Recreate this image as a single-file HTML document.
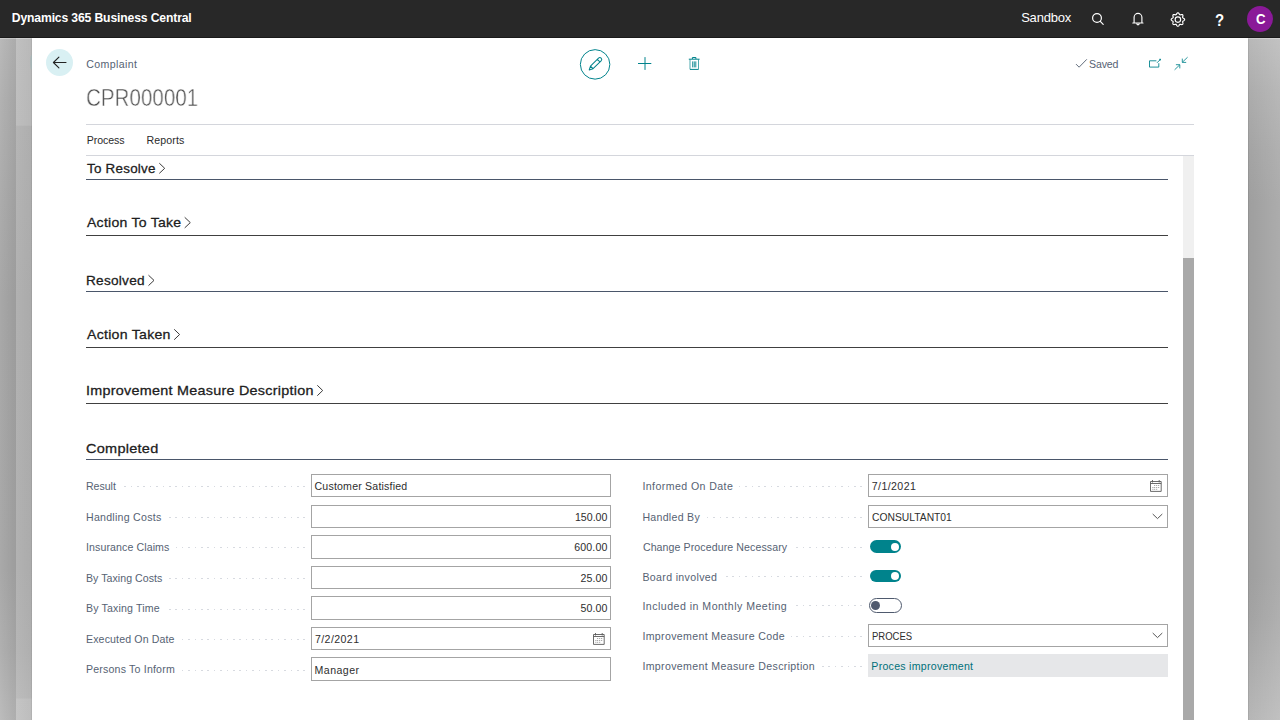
<!DOCTYPE html><html lang="en"><head><meta charset="utf-8"><title>Complaint - CPR000001 - Dynamics 365 Business Central</title><style>
*{box-sizing:border-box;margin:0;padding:0}
html,body{width:1280px;height:720px;overflow:hidden;background:#fff}
body{position:relative;font-family:"Liberation Sans",sans-serif}
.a{position:absolute}
.t{position:absolute;white-space:pre;line-height:20px;transform-origin:0 0}
.bar{left:0;top:0;width:1280px;height:38px;background:#282828;border-bottom:1px solid #1a1a1a}
.s1{left:0;top:38px;width:16px;height:682px;background:linear-gradient(to right,rgba(0,0,0,0),rgba(0,0,0,.075)),linear-gradient(to bottom,#b9b9b9 0%,#b2b2b2 9%,#acacac 24%,#a8a8a8 38%,#a9a9a9 78%,#b0b0b0 90%,#bcbcbc 100%)}
.s2{left:16px;top:38px;width:16px;height:682px;background:linear-gradient(to right,rgba(0,0,0,0),rgba(0,0,0,.04)),linear-gradient(to bottom,#c0c0c0 0%,#bebebe 12.8%,#b5b5b5 12.9%,#b1b1b1 38%,#b2b2b2 78%,#b6b6b6 90%,#bcbcbc 96.8%,#c4c4c4 96.9%,#c5c5c5 100%)}
.s2e{left:31px;top:38px;width:1px;height:682px;background:rgba(0,0,0,.06)}
.s3{left:1248px;top:38px;width:32px;height:682px;background:linear-gradient(to right,rgba(255,255,255,0),rgba(255,255,255,.15)),linear-gradient(to bottom,#b8b8b8 0%,#acacac 7.6%,#a3a3a3 16.5%,#9e9e9e 24%,#9e9e9e 79%,#a2a2a2 85%,#aaaaaa 91%,#b2b2b2 97%,#b6b6b6 100%)}
.s3e{left:1248px;top:38px;width:1px;height:682px;background:rgba(0,0,0,.07)}
.sr{height:1px;background:rgba(255,255,255,.28)}
.hl{height:1px;background:#d4d6dc}
.sl{left:86px;width:1082px;height:1px}
.box{border:1px solid #a4a4a4;background:#fff;width:300px}
.ro{background:#e6e7e9;width:300px}
.dots{height:1px;background-image:repeating-linear-gradient(to left,#d7dae0 0,#d7dae0 1.6px,transparent 1.6px,transparent 6.4px)}
.tg{border-radius:7px;background:#00838c}
.kn{border-radius:50%;background:#fff}
</style></head><body>
<div class="a bar"></div>
<div class="a s1"></div><div class="a s2"></div><div class="a s2e"></div><div class="a s3"></div><div class="a s3e"></div><div class="a sr" style="left:0;top:38px;width:32px"></div><div class="a sr" style="left:1248px;top:38px;width:32px"></div>
<div class="a" style="left:46px;top:49px;width:27px;height:27px;border-radius:50%;background:#d9f0f3"></div>
<div class="a" style="left:1247px;top:6px;width:26px;height:26px;border-radius:50%;background:#8a1998"></div>
<div class="a" style="left:30.3px;top:55px;width:3.4px;height:14.5px;border-radius:50%;background:#a6b4b5;clip-path:inset(0 1.7px 0 0)"></div>
<div class="a hl" style="left:86px;top:124px;width:1108px"></div>
<div class="a hl" style="left:86px;top:155px;width:1108px"></div>
<div class="a" style="left:1183px;top:156px;width:11px;height:564px;background:#f0f0f0"></div>
<div class="a" style="left:1183px;top:258px;width:11px;height:462px;background:#a9a9a9"></div>
<div class="a sl" style="top:179px;background:#4a566a"></div>
<div class="a sl" style="top:235px;background:#404040"></div>
<div class="a sl" style="top:291px;background:#4a566a"></div>
<div class="a sl" style="top:347px;background:#404040"></div>
<div class="a sl" style="top:403px;background:#404040"></div>
<div class="a sl" style="top:459px;background:#4a566a"></div>
<div class="a box" style="left:311px;top:474px;height:23px"></div>
<div class="a box" style="left:311px;top:505px;height:23px"></div>
<div class="a box" style="left:311px;top:535px;height:24px"></div>
<div class="a box" style="left:311px;top:566px;height:23px"></div>
<div class="a box" style="left:311px;top:596px;height:24px"></div>
<div class="a box" style="left:311px;top:627px;height:23px"></div>
<div class="a box" style="left:311px;top:657px;height:24px"></div>
<div class="a box" style="left:868px;top:474px;height:23px"></div>
<div class="a box" style="left:868px;top:505px;height:23px"></div>
<div class="a box" style="left:868px;top:624px;height:23px"></div>
<div class="a ro" style="left:868px;top:654px;height:23px"></div>
<div class="a dots" style="left:122.9px;top:486px;width:181.7px"></div>
<div class="a dots" style="left:167.8px;top:517px;width:136.8px"></div>
<div class="a dots" style="left:175.7px;top:547px;width:128.9px"></div>
<div class="a dots" style="left:168.7px;top:578px;width:135.9px"></div>
<div class="a dots" style="left:166.2px;top:609px;width:138.4px"></div>
<div class="a dots" style="left:181.2px;top:639px;width:123.4px"></div>
<div class="a dots" style="left:181.2px;top:670px;width:123.4px"></div>
<div class="a dots" style="left:739.4px;top:486px;width:122.4px"></div>
<div class="a dots" style="left:706.7px;top:517px;width:155.1px"></div>
<div class="a dots" style="left:793.9px;top:547px;width:67.9px"></div>
<div class="a dots" style="left:723.5px;top:576px;width:138.3px"></div>
<div class="a dots" style="left:792.9px;top:605px;width:68.9px"></div>
<div class="a dots" style="left:790.7px;top:636px;width:71.1px"></div>
<div class="a dots" style="left:821.3px;top:666px;width:40.5px"></div>
<div class="a tg" style="left:870px;top:540px;width:31px;height:13px"></div><div class="a kn" style="left:891px;top:542.5px;width:8.4px;height:8.4px"></div>
<div class="a tg" style="left:870px;top:570px;width:31px;height:12px"></div><div class="a kn" style="left:891px;top:572px;width:8.4px;height:8.4px"></div>
<div class="a" style="left:869px;top:598px;width:33px;height:15px;border-radius:8px;border:1px solid #4f5a6e;background:#fff"></div><div class="a" style="left:870.6px;top:600.7px;width:9.4px;height:9.4px;border-radius:50%;background:#505a6e"></div>
<div class="t" style="left:11.75px;top:8.0px;font-size:12.2px;font-weight:700;color:#fff;letter-spacing:-0.152px;">Dynamics 365 Business Central</div>
<div class="t" style="left:1021.15px;top:8.0px;font-size:13px;font-weight:400;color:#fff;letter-spacing:-0.208px;">Sandbox</div>
<div class="t" style="left:1215.34px;top:11.0px;font-size:17px;font-weight:700;color:#fff;transform:scaleX(0.88);">?</div>
<div class="t" style="left:1255.54px;top:9.0px;font-size:14.2px;font-weight:700;color:#fff;transform:scaleX(0.9297);">C</div>
<div class="t" style="left:86.2px;top:54.0px;font-size:10.6px;font-weight:400;color:#566273;letter-spacing:0.387px;">Complaint</div>
<div class="t" style="left:86.03px;top:88.0px;font-size:24px;font-weight:400;color:#4a4a4a;transform:scaleX(0.8577);-webkit-text-stroke:0.5px #fff;will-change:transform;">CPR000001</div>
<div class="t" style="left:1089.0px;top:54.0px;font-size:10.6px;font-weight:400;color:#566273;letter-spacing:-0.15px;">Saved</div>
<div class="t" style="left:86.75px;top:130.0px;font-size:10.6px;font-weight:400;color:#2b2b2b;letter-spacing:-0.092px;">Process</div>
<div class="t" style="left:146.5px;top:130.0px;font-size:10.6px;font-weight:400;color:#2b2b2b;letter-spacing:0.125px;">Reports</div>
<div class="t" style="left:86.65px;top:159.0px;font-size:13.4px;font-weight:400;color:#202020;transform:scaleX(0.9993);-webkit-text-stroke:0.27px #202020;letter-spacing:0.25px;">To Resolve</div>
<div class="t" style="left:86.9px;top:213.0px;font-size:13.4px;font-weight:400;color:#202020;transform:scaleX(1.0476);-webkit-text-stroke:0.27px #202020;letter-spacing:0.25px;">Action To Take</div>
<div class="t" style="left:86.23px;top:271.0px;font-size:13.4px;font-weight:400;color:#202020;transform:scaleX(1.0179);-webkit-text-stroke:0.27px #202020;letter-spacing:0.25px;">Resolved</div>
<div class="t" style="left:86.9px;top:325.0px;font-size:13.4px;font-weight:400;color:#202020;transform:scaleX(1.0543);-webkit-text-stroke:0.27px #202020;letter-spacing:0.25px;">Action Taken</div>
<div class="t" style="left:85.76px;top:381.0px;font-size:13.4px;font-weight:400;color:#202020;transform:scaleX(1.0721);-webkit-text-stroke:0.27px #202020;letter-spacing:0.25px;">Improvement Measure Description</div>
<div class="t" style="left:86.09px;top:439.0px;font-size:13.4px;font-weight:400;color:#202020;transform:scaleX(1.082);-webkit-text-stroke:0.27px #202020;letter-spacing:0.25px;">Completed</div>
<div class="t" style="left:86.0px;top:476.0px;font-size:10.6px;font-weight:400;color:#566273;letter-spacing:-0.04px;">Result</div>
<div class="t" style="left:86.0px;top:507.0px;font-size:10.6px;font-weight:400;color:#566273;letter-spacing:0.258px;">Handling Costs</div>
<div class="t" style="left:86.0px;top:537.0px;font-size:10.6px;font-weight:400;color:#566273;letter-spacing:0.1px;">Insurance Claims</div>
<div class="t" style="left:86.0px;top:568.0px;font-size:10.6px;font-weight:400;color:#566273;letter-spacing:0.039px;">By Taxing Costs</div>
<div class="t" style="left:86.0px;top:598.0px;font-size:10.6px;font-weight:400;color:#566273;letter-spacing:0.15px;">By Taxing Time</div>
<div class="t" style="left:86.0px;top:629.0px;font-size:10.6px;font-weight:400;color:#566273;letter-spacing:0.13px;">Executed On Date</div>
<div class="t" style="left:86.0px;top:659.0px;font-size:10.6px;font-weight:400;color:#566273;letter-spacing:0.184px;">Persons To Inform</div>
<div class="t" style="left:314.5px;top:476.0px;font-size:10.6px;font-weight:400;color:#2e2e2e;letter-spacing:0.188px;">Customer Satisfied</div>
<div class="t" style="left:574.9px;top:507.0px;font-size:10.6px;font-weight:400;color:#2e2e2e;letter-spacing:0.02px;">150.00</div>
<div class="t" style="left:574.15px;top:537.0px;font-size:10.6px;font-weight:400;color:#2e2e2e;letter-spacing:0.17px;">600.00</div>
<div class="t" style="left:580.4px;top:568.0px;font-size:10.6px;font-weight:400;color:#2e2e2e;letter-spacing:0.125px;">25.00</div>
<div class="t" style="left:580.4px;top:598.0px;font-size:10.6px;font-weight:400;color:#2e2e2e;letter-spacing:0.125px;">50.00</div>
<div class="t" style="left:314.9px;top:629.0px;font-size:10.6px;font-weight:400;color:#2e2e2e;letter-spacing:0.421px;">7/2/2021</div>
<div class="t" style="left:314.5px;top:660.0px;font-size:10.6px;font-weight:400;color:#2e2e2e;letter-spacing:0.467px;">Manager</div>
<div class="t" style="left:642.4px;top:476.0px;font-size:10.6px;font-weight:400;color:#566273;letter-spacing:0.417px;">Informed On Date</div>
<div class="t" style="left:642.4px;top:507.0px;font-size:10.6px;font-weight:400;color:#566273;letter-spacing:0.289px;">Handled By</div>
<div class="t" style="left:642.9px;top:537.0px;font-size:10.6px;font-weight:400;color:#566273;letter-spacing:0.09px;">Change Procedure Necessary</div>
<div class="t" style="left:642.4px;top:567.0px;font-size:10.6px;font-weight:400;color:#566273;letter-spacing:0.342px;">Board involved</div>
<div class="t" style="left:642.4px;top:596.0px;font-size:10.6px;font-weight:400;color:#566273;letter-spacing:0.479px;">Included in Monthly Meeting</div>
<div class="t" style="left:642.4px;top:626.0px;font-size:10.6px;font-weight:400;color:#566273;letter-spacing:0.343px;">Improvement Measure Code</div>
<div class="t" style="left:642.4px;top:656.0px;font-size:10.6px;font-weight:400;color:#566273;letter-spacing:0.347px;">Improvement Measure Description</div>
<div class="t" style="left:871.75px;top:476.0px;font-size:10.6px;font-weight:400;color:#2e2e2e;letter-spacing:0.407px;">7/1/2021</div>
<div class="t" style="left:871.76px;top:507.0px;font-size:10.6px;font-weight:400;color:#2e2e2e;transform:scaleX(0.9735);">CONSULTANT01</div>
<div class="t" style="left:871.6px;top:626.0px;font-size:10.6px;font-weight:400;color:#2e2e2e;transform:scaleX(0.896);">PROCES</div>
<div class="t" style="left:871.3px;top:656.0px;font-size:10.6px;font-weight:400;color:#00707a;letter-spacing:0.271px;">Proces improvement</div>
<svg class="a" style="left:0;top:0" width="1280" height="720" viewBox="0 0 1280 720" fill="none">
<!-- back arrow -->
<g stroke="#222" stroke-width="1.1" stroke-linecap="round" stroke-linejoin="round"><path d="M66 62.5H53.4M58.9 57.1L53.4 62.5L58.9 67.9"/></g>
<!-- top bar: search, bell, gear -->
<g stroke="#fff" stroke-width="1.2" stroke-linecap="round">
<circle cx="1097" cy="18" r="4.4"/><path d="M1100.3 21.4L1103.2 24.3"/>
<path d="M1134.1 22.9V17.3a3.9 3.9 0 0 1 7.8 0V22.9M1132.8 23H1143M1136.9 24.1a1.2 1.2 0 0 0 2.2 0" stroke-linejoin="round" stroke-width="1.15"/>
<circle cx="1177.9" cy="19.55" r="2.75" stroke-width="1.15"/>
<path d="M1177.90 12.80 1178.33 12.92 1178.73 13.25 1179.06 13.71 1179.34 14.19 1179.59 14.57 1179.87 14.79 1180.23 14.83 1180.68 14.74 1181.21 14.60 1181.77 14.51 1182.28 14.56 1182.67 14.78 1182.89 15.17 1182.94 15.68 1182.85 16.24 1182.71 16.77 1182.62 17.22 1182.66 17.58 1182.88 17.86 1183.26 18.11 1183.74 18.39 1184.20 18.72 1184.53 19.12 1184.65 19.55 1184.53 19.98 1184.20 20.38 1183.74 20.71 1183.26 20.99 1182.88 21.24 1182.66 21.52 1182.62 21.88 1182.71 22.32 1182.85 22.86 1182.94 23.42 1182.89 23.93 1182.67 24.32 1182.28 24.54 1181.77 24.59 1181.21 24.50 1180.68 24.36 1180.23 24.27 1179.87 24.31 1179.59 24.53 1179.34 24.91 1179.06 25.39 1178.73 25.85 1178.33 26.18 1177.90 26.30 1177.47 26.18 1177.07 25.85 1176.74 25.39 1176.46 24.91 1176.21 24.53 1175.93 24.31 1175.57 24.27 1175.12 24.36 1174.59 24.50 1174.03 24.59 1173.52 24.54 1173.13 24.32 1172.91 23.93 1172.86 23.42 1172.95 22.86 1173.09 22.33 1173.18 21.88 1173.14 21.52 1172.92 21.24 1172.54 20.99 1172.06 20.71 1171.60 20.38 1171.27 19.98 1171.15 19.55 1171.27 19.12 1171.60 18.72 1172.06 18.39 1172.54 18.11 1172.92 17.86 1173.14 17.58 1173.18 17.22 1173.09 16.77 1172.95 16.24 1172.86 15.68 1172.91 15.17 1173.13 14.78 1173.52 14.56 1174.03 14.51 1174.59 14.60 1175.12 14.74 1175.57 14.83 1175.93 14.79 1176.21 14.57 1176.46 14.19 1176.74 13.71 1177.07 13.25 1177.47 12.92Z" stroke-linejoin="round" stroke-width="1.15"/>
</g>
<!-- edit (circle + pencil) -->
<g stroke="#00838c" stroke-width="1.1">
<circle cx="595.1" cy="64.4" r="14.75" stroke-width="1"/>
<g transform="translate(589.2 69.9) rotate(-44.5)" stroke-linejoin="round" stroke-width="1"><path d="M0 0L3.6 -1.85H14.9a1.85 1.85 0 0 1 0 3.7H3.6ZM3.6 -1.85V1.85M13.2 -1.85V1.85"/></g>
</g>
<!-- plus -->
<path d="M638 63.5H651.3" stroke="#00838c" stroke-width="1"/><path d="M645 57.1V69.9" stroke="#00838c" stroke-width="1"/>
<!-- trash -->
<g stroke="#00838c" stroke-width="1" stroke-linejoin="round">
<path d="M688.8 59.2H699.6M692.4 59V57.5H695.9V59M690 69.4H698.5"/><path d="M690 59.4V69.4M698.5 59.4V69.4" stroke-opacity=".7"/>
<path d="M692.7 61.4V67.4M694.25 61.4V67.4M695.8 61.4V67.4" stroke-width=".9"/>
</g>
<!-- saved check -->
<path d="M1076 64.1L1079.1 67.2L1086.8 59.3" stroke="#505c6d" stroke-width=".9"/>
<!-- pop-out -->
<g stroke="#00838c" stroke-width="1" stroke-opacity=".88"><path d="M1156.4 60.8H1149.5V67.1H1158.8V63.2M1157 62.8L1160 59.8"/><rect x="1159.3" y="58.8" width="1.6" height="1.6" fill="#00838c" stroke="none"/></g>
<!-- collapse arrows -->
<g stroke="#00838c" stroke-width=".95" stroke-opacity=".88"><path d="M1187.6 57.2L1182.4 62.2M1182.3 58.6V62.4H1186.2M1174.6 69.8L1179.7 64.9M1175.9 64.7H1179.8V68.4"/></g>
<!-- heading chevrons -->
<g stroke="#3a3a3a" stroke-width="1" stroke-linejoin="miter">
<path d="M159.3 163.2L164.7 168.3L159.3 173.4"/>
<path d="M184.7 217.3L190.3 222.6L184.7 227.9"/>
<path d="M148.5 275.2L154 280.4L148.5 285.6"/>
<path d="M174.2 329.3L179.6 334.5L174.2 339.7"/>
<path d="M317.3 385.3L322.7 390.5L317.3 395.7"/>
</g>
<!-- calendar icons -->
<g stroke="#5a5a5a" stroke-width=".9">
<path d="M1150.5 481.5H1161.2V491.4H1150.5ZM1150.5 483.5H1161.2M1152.5 480V482.5M1159.2 480V482.5"/>
<path d="M1154.2 485.5h1M1156.2 485.5h1M1158.2 485.5h1M1152.4 487.5h1M1154.2 487.5h1M1156.2 487.5h1M1158.2 487.5h1M1152.4 489.3h1M1154.2 489.3h1M1156.2 489.3h1" stroke="#8a8a8a"/>
</g>
<g transform="translate(-557 153)" stroke="#5a5a5a" stroke-width=".9">
<path d="M1150.5 481.5H1161.2V491.4H1150.5ZM1150.5 483.5H1161.2M1152.5 480V482.5M1159.2 480V482.5"/>
<path d="M1154.2 485.5h1M1156.2 485.5h1M1158.2 485.5h1M1152.4 487.5h1M1154.2 487.5h1M1156.2 487.5h1M1158.2 487.5h1M1152.4 489.3h1M1154.2 489.3h1M1156.2 489.3h1" stroke="#8a8a8a"/>
</g>
<!-- dropdown chevrons -->
<g stroke="#555" stroke-width="1"><path d="M1152.7 514L1157.5 518.6L1162.3 514"/><path d="M1152.7 633L1157.5 637.6L1162.3 633"/></g>
</svg>

</body></html>
